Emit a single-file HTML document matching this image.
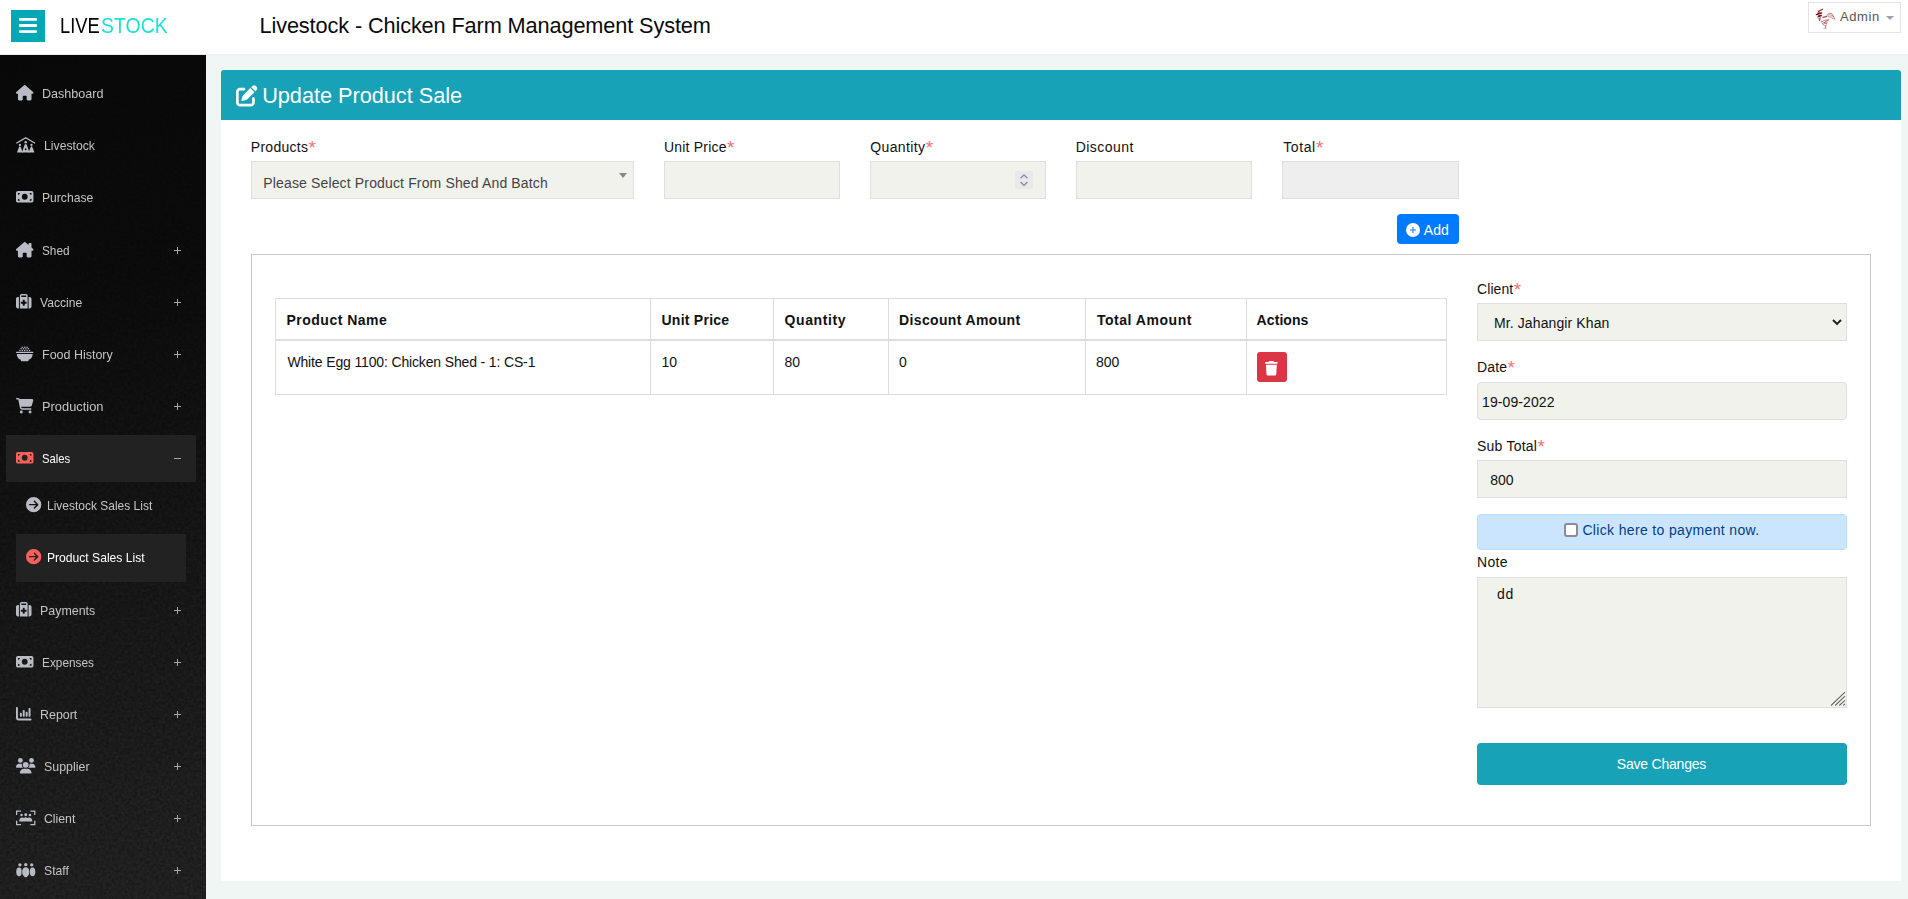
<!DOCTYPE html>
<html lang="en">
<head>
<meta charset="utf-8">
<title>Livestock - Chicken Farm Management System</title>
<style>
*{box-sizing:border-box;margin:0;padding:0}
html,body{width:1908px;height:899px;overflow:hidden}
body{font-family:"Liberation Sans",sans-serif;font-size:14px;color:#111;background:#f0f6f3;position:relative}
.ic{position:absolute;display:block;overflow:visible}
.t{position:absolute;white-space:nowrap}
#hdr{position:absolute;left:0;top:0;width:1908px;height:55px;background:#fff;border-bottom:1px solid #eceef3}
#burger{position:absolute;left:11px;top:10px;width:34px;height:32px;background:#01a8b3}
#admin{position:absolute;left:1808px;top:2px;width:93px;height:31px;border:1px solid #e4e4e4;background:#fff}
#caret{position:absolute;left:1886px;top:16px;width:0;height:0;border-left:4px solid transparent;border-right:4px solid transparent;border-top:4px solid #9a9fb2}
#side{position:absolute;left:0;top:55px;width:206px;height:844px;background:linear-gradient(165deg,#080808 0%,#0a0a0a 30%,#121212 62%,#1a1a1a 100%);overflow:hidden}
.bx{position:absolute;background:#222}
.pl{position:absolute;width:7px;height:7px}
.pl:before{content:"";position:absolute;left:0;top:3px;width:7px;height:1px;background:#a8a8a8}
.pl.p:after{content:"";position:absolute;left:3px;top:0;width:1px;height:7px;background:#a8a8a8}
#card{position:absolute;left:221px;top:70px;width:1680px;height:811px;background:#fff;border-radius:3px 3px 0 0}
#chead{position:absolute;left:221px;top:70px;width:1680px;height:50px;background:#17a2b8;border-radius:3px 3px 0 0}
.lb{color:#111}
.lb em{font-style:normal;color:#ff6d77;font-size:19px;line-height:0;position:relative;top:2.2px;left:0.3px;letter-spacing:0}
.inp{position:absolute;background:#f1f2eb;border:1px solid #dfdfe3;height:38px}
#panel{position:absolute;left:251px;top:254px;width:1620px;height:572px;border:1px solid #c9c9c9;background:#fff}
.tb{position:absolute;background:#dddddd}
</style>
</head>
<body>

<div id="hdr"></div>
<div id="burger"></div>
<svg class="ic" style="left:18.9px;top:18px;width:18px;height:15.2px;fill:#fff" viewBox="0 0 18 15.2"><rect x="0" y="0" width="18" height="2.800" rx="1"/><rect x="0" y="6.100" width="18" height="2.800" rx="1"/><rect x="0" y="12.200" width="18" height="2.800" rx="1"/></svg>
<div class="t " id="logo1" style="left:59.6px;top:11.97px;font-size:21.73px;line-height:27px;color:#000;transform:scaleX(0.8421);transform-origin:0 0;">LIVE</div>
<div class="t " id="logo2" style="left:101.0px;top:11.97px;font-size:21.73px;line-height:27px;color:#1fe0d4;transform:scaleX(0.8957);transform-origin:0 0;">STOCK</div>
<div class="t " id="title" style="left:259.5px;top:11.97px;font-size:21.73px;line-height:27px;color:#0a0a0a;letter-spacing:-0.119px;">Livestock - Chicken Farm Management System</div>
<div id="admin"></div>
<svg class="ic" style="left:1812px;top:6px;width:26px;height:26px" viewBox="1812 6 26 26" fill="none" stroke="#8e1b1b" stroke-linecap="round"><path d="M1818.500 11.600l4-2.300M1819 10.800l3.200-1" stroke="#9c2a2a" stroke-width="1.100"/><path d="M1816.300 14.600l5.200-1.400M1818 13.200l3.600-.4" stroke="#7d0a0a" stroke-width="1.200"/><path d="M1817.800 17l3.600-1.200M1818.600 15.800l2.600-.4" stroke="#7d0a0a" stroke-width="1.200"/><path d="M1819 18.400l.5 2.400M1820.200 17.600l-.2 2" stroke="#8e1b1b" stroke-width="1" opacity=".8"/><path d="M1823 17.400l3.800-.9" stroke-width="1.100" opacity=".85"/><path d="M1826.500 16.200c1-1.800 2.200-3 3.400-3.100 1.500-.1 2.600 1.200 3.400 2.800.6 1.200 1.100 2.300 1.400 3.300" stroke-width=".9" opacity=".6"/><path d="M1828 15.500l3-1.500M1828.500 16.800l4-1.600M1830 17.300l3.500-.6M1832 18.400l2 .4" stroke-width=".9" opacity=".45"/><path d="M1821.200 21c.6 2.200 2 4.200 4.400 5.300M1822 21.200l4.800 2.400M1823.600 20.400l4.400-.6M1824.400 22.800l3.800-2.400M1823 24l4.500-1.200M1825.200 21.400l3.800-1.800" stroke-width=".9" opacity=".5"/><path d="M1826.200 24.800l-.8 2.800" stroke-width=".9" opacity=".6"/><path d="M1823.800 28.600l2.600-.3" stroke-width=".9" opacity=".4"/></svg>
<div class="t " id="adm" style="left:1840.0px;top:8.4px;font-size:13.0px;line-height:18px;color:#555;letter-spacing:0.6px;">Admin</div>
<div id="caret"></div>
<div id="side"><svg width="206" height="844" style="position:absolute;left:0;top:0;display:block;-webkit-mask-image:linear-gradient(165deg,rgba(0,0,0,.15) 0%,rgba(0,0,0,.3) 30%,#000 90%);mask-image:linear-gradient(165deg,rgba(0,0,0,.15) 0%,rgba(0,0,0,.3) 30%,#000 90%)"><filter id="nz" x="0" y="0" width="100%" height="100%"><feTurbulence type="fractalNoise" baseFrequency="0.32" numOctaves="3" seed="4"/><feColorMatrix type="matrix" values="0 0 0 0 1  0 0 0 0 1  0 0 0 0 1  0.050 0.050 0.050 0 -0.048"/></filter><rect width="206" height="844" filter="url(#nz)"/></svg></div>
<div class="bx" style="left:6px;top:435px;width:190px;height:47px"></div>
<div class="bx" style="left:16px;top:534px;width:170px;height:48px"></div>
<svg class="ic" style="left:15.8px;top:84.7px;width:17.44px;height:15.5px;fill:#b9bcc4;" viewBox="0 0 576 512"><path d="M575.8 255.5c0 18-15 32.1-32 32.1h-32l.7 160.2c0 2.700-.2 5.400-.5 8.100V472c0 22.100-17.900 40-40 40H456c-1.100 0-2.200 0-3.300-.1c-1.400 .1-2.800 .1-4.200 .1H416 392c-22.100 0-40-17.900-40-40V448 384c0-17.700-14.300-32-32-32H256c-17.700 0-32 14.300-32 32v64 24c0 22.100-17.900 40-40 40H160 128.100c-1.500 0-3-.1-4.500-.2c-1.200 .1-2.400 .2-3.600 .2H104c-22.100 0-40-17.900-40-40V360c0-.9 0-1.900 .1-2.800V287.600H32c-18 0-32-14-32-32.100c0-9 3-17 10-24L266.400 8c7-7 15-8 22-8s15 2 21 7L564.800 231.500c8 7 12 15 11 24z"/></svg>
<div class="t sd" id="s_Dashboard" style="left:42.3px;top:86.0px;font-size:13.0px;line-height:16px;color:#c4c4c4;transform:scaleX(0.9671);transform-origin:0 0;">Dashboard</div>
<svg class="ic" style="left:15.8px;top:136.7px;width:19.38px;height:15.5px;fill:#b9bcc4;" viewBox="0 0 640 512"><path d="M320 0L640 186 620 224 320 50 20 224 0 186z"/><circle cx="320" cy="176" r="42"/><path d="M320 228c14 0 26 8 32 22l92 262H196l92-262c6-14 18-22 32-22z"/><circle cx="320" cy="404" r="30" fill="#0b0b0b"/><circle cx="128" cy="262" r="38"/><path d="M128 308c12 0 22 7 27 19l71 185H30l71-185c5-12 15-19 27-19z"/><circle cx="512" cy="262" r="38"/><path d="M512 308c12 0 22 7 27 19l71 185H414l71-185c5-12 15-19 27-19z"/></svg>
<div class="t sd" id="s_Livestock" style="left:43.75px;top:138.0px;font-size:13.0px;line-height:16px;color:#c4c4c4;transform:scaleX(0.9406);transform-origin:0 0;">Livestock</div>
<svg class="ic" style="left:15.8px;top:188.7px;width:17.44px;height:15.5px;fill:#b9bcc4;" viewBox="0 0 576 512"><path d="M64 64C28.7 64 0 92.7 0 128V384c0 35.300 28.700 64 64 64H512c35.300 0 64-28.700 64-64V128c0-35.300-28.700-64-64-64H64zm64 320H64V320c35.300 0 64 28.700 64 64zM64 192V128h64c0 35.300-28.700 64-64 64zM448 384c0-35.300 28.700-64 64-64v64H448zm64-192c-35.300 0-64-28.700-64-64h64v64zM288 160a96 96 0 1 1 0 192 96 96 0 1 1 0-192z"/></svg>
<div class="t sd" id="s_Purchase" style="left:42.3px;top:190.0px;font-size:13.0px;line-height:16px;color:#c4c4c4;transform:scaleX(0.9326);transform-origin:0 0;">Purchase</div>
<svg class="ic" style="left:15.8px;top:241.7px;width:17.44px;height:15.5px;fill:#b9bcc4;" viewBox="0 0 576 512"><path d="M543.8 287.6c17 0 32-14 32-32.1c1-9-3-17-11-24L512 185V64c0-17.700-14.300-32-32-32H448c-17.700 0-32 14.300-32 32v36.700L309.500 7c-6-5-14-7-21-7s-15 1-22 8L10 231.500c-7 7-10 15-10 24c0 18 14 32.100 32 32.100h32v69.700c-.1 .9-.1 1.800-.1 2.800V472c0 22.100 17.900 40 40 40h16c1.200 0 2.400-.1 3.600-.2c1.500 .1 3 .2 4.500 .2H160h24c22.100 0 40-17.900 40-40V448 384c0-17.700 14.300-32 32-32h64c17.700 0 32 14.300 32 32v64 24c0 22.100 17.900 40 40 40h24 32.500c1.400 0 2.800 0 4.200-.1c1.100 .1 2.200 .1 3.300 .1h16c22.100 0 40-17.900 40-40V455.800c.3-2.600 .5-5.300 .5-8.100l-.7-160.200h32z"/></svg>
<div class="t sd" id="s_Shed" style="left:42.3px;top:243.0px;font-size:13.0px;line-height:16px;color:#c4c4c4;transform:scaleX(0.9072);transform-origin:0 0;">Shed</div>
<div class="pl p" style="left:174px;top:247px"></div>
<svg class="ic" style="left:15.8px;top:293.7px;width:15.5px;height:15.5px;fill:#b9bcc4;" viewBox="0 0 512 512"><path d="M184 48H328c4.400 0 8 3.600 8 8V96H176V56c0-4.400 3.600-8 8-8zm-56 8V96v32V480H384V128 96 56c0-30.900-25.100-56-56-56H184c-30.900 0-56 25.100-56 56zM96 96H64C28.700 96 0 124.700 0 160V416c0 35.300 28.700 64 64 64H96V96zM416 480h32c35.300 0 64-28.700 64-64V160c0-35.300-28.700-64-64-64H416V480zM224 208c0-8.800 7.200-16 16-16h32c8.800 0 16 7.200 16 16v48h48c8.800 0 16 7.200 16 16v32c0 8.800-7.200 16-16 16H288v48c0 8.800-7.200 16-16 16H240c-8.800 0-16-7.200-16-16V320H176c-8.800 0-16-7.200-16-16V272c0-8.800 7.200-16 16-16h48V208z"/></svg>
<div class="t sd" id="s_Vaccine" style="left:40.1px;top:295.0px;font-size:13.0px;line-height:16px;color:#c4c4c4;transform:scaleX(0.931);transform-origin:0 0;">Vaccine</div>
<div class="pl p" style="left:174px;top:299px"></div>
<svg class="ic" style="left:15.8px;top:345.7px;width:17.44px;height:15.5px;fill:#b9bcc4;" viewBox="0 0 576 512"><rect x="0" y="190" width="576" height="44" rx="22"/><path d="M26 262H550C550 356 498 424 416 456v14c0 18-14 32-32 32H192c-18 0-32-14-32-32v-14C78 424 26 356 26 262z"/><circle cx="128" cy="150" r="25"/><circle cx="208" cy="150" r="25"/><circle cx="288" cy="150" r="25"/><circle cx="368" cy="150" r="25"/><circle cx="448" cy="150" r="25"/><circle cx="168" cy="94" r="25"/><circle cx="248" cy="94" r="25"/><circle cx="328" cy="94" r="25"/><circle cx="408" cy="94" r="25"/><circle cx="208" cy="38" r="25"/><circle cx="288" cy="38" r="25"/><circle cx="368" cy="38" r="25"/></svg>
<div class="t sd" id="s_FoodHistory" style="left:42.3px;top:347.0px;font-size:13.0px;line-height:16px;color:#c4c4c4;transform:scaleX(0.9603);transform-origin:0 0;">Food History</div>
<div class="pl p" style="left:174px;top:351px"></div>
<svg class="ic" style="left:15.8px;top:397.7px;width:17.44px;height:15.5px;fill:#b9bcc4;" viewBox="0 0 576 512"><path d="M0 24C0 10.700 10.700 0 24 0H69.500c22 0 41.500 12.800 50.600 32h411c26.300 0 45.500 25 38.600 50.400l-41 152.300c-8.500 31.400-37 53.300-69.500 53.300H170.700l5.400 28.500c2.200 11.300 12.100 19.500 23.600 19.500H488c13.300 0 24 10.700 24 24s-10.700 24-24 24H199.700c-34.600 0-64.300-24.600-70.700-58.500L77.400 54.500c-.7-3.800-4-6.500-7.900-6.500H24C10.700 48 0 37.300 0 24zM128 464a48 48 0 1 1 96 0 48 48 0 1 1 -96 0zm336-48a48 48 0 1 1 0 96 48 48 0 1 1 0-96z"/></svg>
<div class="t sd" id="s_Production" style="left:42.3px;top:399.0px;font-size:13.0px;line-height:16px;color:#c4c4c4;transform:scaleX(0.9882);transform-origin:0 0;">Production</div>
<div class="pl p" style="left:174px;top:403px"></div>
<svg class="ic" style="left:15.8px;top:449.7px;width:17.44px;height:15.5px;fill:#f9605a;" viewBox="0 0 576 512"><path d="M64 64C28.7 64 0 92.7 0 128V384c0 35.300 28.700 64 64 64H512c35.300 0 64-28.700 64-64V128c0-35.300-28.700-64-64-64H64zm64 320H64V320c35.300 0 64 28.700 64 64zM64 192V128h64c0 35.300-28.700 64-64 64zM448 384c0-35.300 28.700-64 64-64v64H448zm64-192c-35.300 0-64-28.700-64-64h64v64zM288 160a96 96 0 1 1 0 192 96 96 0 1 1 0-192z"/></svg>
<div class="t sd" id="s_Sales" style="left:42.3px;top:451.0px;font-size:13.0px;line-height:16px;color:#fff;transform:scaleX(0.8666);transform-origin:0 0;">Sales</div>
<div class="pl" style="left:174px;top:455px"></div>
<svg class="ic" style="left:25.9px;top:497px;width:15.3px;height:15.3px;fill:#b9bcc4;" viewBox="0 0 512 512"><path d="M0 256a256 256 0 1 0 512 0A256 256 0 1 0 0 256zM297 385c-9.400 9.400-24.600 9.400-33.900 0s-9.400-24.600 0-33.900l71-71L120 280c-13.300 0-24-10.700-24-24s10.700-24 24-24l214.100 0-71-71c-9.400-9.400-9.400-24.600 0-33.900s24.600-9.400 33.900 0L409 239c9.400 9.400 9.400 24.600 0 33.900L297 385z"/></svg>
<div class="t sd" id="s_LivestockSalesList" style="left:47.2px;top:498.0px;font-size:13.0px;line-height:16px;color:#c4c4c4;transform:scaleX(0.9221);transform-origin:0 0;">Livestock Sales List</div>
<svg class="ic" style="left:25.9px;top:549px;width:15.3px;height:15.3px;fill:#f9605a;" viewBox="0 0 512 512"><path d="M0 256a256 256 0 1 0 512 0A256 256 0 1 0 0 256zM297 385c-9.400 9.400-24.600 9.400-33.900 0s-9.400-24.600 0-33.900l71-71L120 280c-13.300 0-24-10.700-24-24s10.700-24 24-24l214.100 0-71-71c-9.400-9.400-9.400-24.600 0-33.900s24.600-9.400 33.900 0L409 239c9.400 9.400 9.400 24.600 0 33.900L297 385z"/></svg>
<div class="t sd" id="s_ProductSalesList" style="left:47.2px;top:550.0px;font-size:13.0px;line-height:16px;color:#fff;transform:scaleX(0.9316);transform-origin:0 0;">Product Sales List</div>
<svg class="ic" style="left:15.8px;top:601.7px;width:15.5px;height:15.5px;fill:#b9bcc4;" viewBox="0 0 512 512"><path d="M184 48H328c4.400 0 8 3.600 8 8V96H176V56c0-4.400 3.600-8 8-8zm-56 8V96v32V480H384V128 96 56c0-30.900-25.100-56-56-56H184c-30.900 0-56 25.100-56 56zM96 96H64C28.700 96 0 124.700 0 160V416c0 35.300 28.700 64 64 64H96V96zM416 480h32c35.300 0 64-28.700 64-64V160c0-35.300-28.700-64-64-64H416V480zM224 208c0-8.800 7.200-16 16-16h32c8.800 0 16 7.200 16 16v48h48c8.800 0 16 7.200 16 16v32c0 8.800-7.200 16-16 16H288v48c0 8.800-7.200 16-16 16H240c-8.800 0-16-7.200-16-16V320H176c-8.800 0-16-7.200-16-16V272c0-8.800 7.200-16 16-16h48V208z"/></svg>
<div class="t sd" id="s_Payments" style="left:40.1px;top:603.0px;font-size:13.0px;line-height:16px;color:#c4c4c4;transform:scaleX(0.955);transform-origin:0 0;">Payments</div>
<div class="pl p" style="left:174px;top:607px"></div>
<svg class="ic" style="left:15.8px;top:653.7px;width:17.44px;height:15.5px;fill:#b9bcc4;" viewBox="0 0 576 512"><path d="M64 64C28.7 64 0 92.7 0 128V384c0 35.300 28.700 64 64 64H512c35.300 0 64-28.700 64-64V128c0-35.300-28.700-64-64-64H64zm64 320H64V320c35.300 0 64 28.700 64 64zM64 192V128h64c0 35.300-28.700 64-64 64zM448 384c0-35.300 28.700-64 64-64v64H448zm64-192c-35.300 0-64-28.700-64-64h64v64zM288 160a96 96 0 1 1 0 192 96 96 0 1 1 0-192z"/></svg>
<div class="t sd" id="s_Expenses" style="left:42.3px;top:655.0px;font-size:13.0px;line-height:16px;color:#c4c4c4;transform:scaleX(0.9099);transform-origin:0 0;">Expenses</div>
<div class="pl p" style="left:174px;top:659px"></div>
<svg class="ic" style="left:15.8px;top:705.7px;width:15.5px;height:15.5px;fill:#b9bcc4;" viewBox="0 0 512 512"><path d="M32 32c17.700 0 32 14.300 32 32V400c0 8.800 7.200 16 16 16H480c17.700 0 32 14.300 32 32s-14.300 32-32 32H80c-44.200 0-80-35.800-80-80V64C0 46.300 14.300 32 32 32zM160 224c17.700 0 32 14.300 32 32v64c0 17.700-14.300 32-32 32s-32-14.300-32-32V256c0-17.700 14.300-32 32-32zm128-64V320c0 17.700-14.300 32-32 32s-32-14.300-32-32V160c0-17.700 14.300-32 32-32s32 14.300 32 32zm64 32c17.700 0 32 14.300 32 32v96c0 17.700-14.300 32-32 32s-32-14.300-32-32V224c0-17.700 14.300-32 32-32zM480 96V320c0 17.700-14.300 32-32 32s-32-14.300-32-32V96c0-17.700 14.300-32 32-32s32 14.300 32 32z"/></svg>
<div class="t sd" id="s_Report" style="left:40.1px;top:707.0px;font-size:13.0px;line-height:16px;color:#c4c4c4;transform:scaleX(0.9561);transform-origin:0 0;">Report</div>
<div class="pl p" style="left:174px;top:711px"></div>
<svg class="ic" style="left:15.8px;top:757.7px;width:19.38px;height:15.5px;fill:#b9bcc4;" viewBox="0 0 640 512"><path d="M144 0a80 80 0 1 1 0 160A80 80 0 1 1 144 0zM512 0a80 80 0 1 1 0 160A80 80 0 1 1 512 0zM0 298.700C0 239.800 47.800 192 106.700 192h42.700c15.900 0 31 3.500 44.600 9.700c-1.300 7.200-1.900 14.700-1.900 22.300c0 38.200 16.800 72.500 43.300 96c-.2 0-.4 0-.7 0H21.300C9.600 320 0 310.400 0 298.700zM405.300 320c-.2 0-.4 0-.7 0c26.600-23.500 43.300-57.800 43.300-96c0-7.600-.7-15-1.900-22.300c13.600-6.300 28.700-9.700 44.600-9.700h42.700C592.200 192 640 239.800 640 298.700c0 11.800-9.600 21.300-21.300 21.300H405.300zM224 224a96 96 0 1 1 192 0 96 96 0 1 1 -192 0zM128 485.300C128 411.700 187.700 352 261.300 352H378.700C452.300 352 512 411.700 512 485.300c0 14.700-11.900 26.700-26.700 26.700H154.700c-14.700 0-26.700-11.900-26.700-26.700z"/></svg>
<div class="t sd" id="s_Supplier" style="left:44.2px;top:759.0px;font-size:13.0px;line-height:16px;color:#c4c4c4;transform:scaleX(0.9542);transform-origin:0 0;">Supplier</div>
<div class="pl p" style="left:174px;top:763px"></div>
<svg class="ic" style="left:15.8px;top:809.7px;width:19.38px;height:15.5px;fill:#b9bcc4;" viewBox="0 0 640 512"><path d="M0 16h165v42H42v108H0zM640 16H475v42h123v108h42zM0 505h165v-42H42V355H0zM640 505H475v-42h123V355h42z"/><circle cx="322" cy="158" r="48"/><circle cx="182" cy="168" r="42"/><circle cx="462" cy="168" r="42"/><path d="M104 376c0-82 44-130 104-130 28 0 48 8 60 20 14-16 34-24 54-24s40 8 54 24c12-12 32-20 60-20 60 0 104 48 104 130z"/></svg>
<div class="t sd" id="s_Client" style="left:44.2px;top:811.0px;font-size:13.0px;line-height:16px;color:#c4c4c4;transform:scaleX(0.9433);transform-origin:0 0;">Client</div>
<div class="pl p" style="left:174px;top:815px"></div>
<svg class="ic" style="left:15.8px;top:861.7px;width:19.38px;height:15.5px;fill:#b9bcc4;" viewBox="0 0 640 512"><circle cx="129" cy="92" r="54"/><circle cx="323" cy="88" r="56"/><circle cx="518" cy="92" r="54"/><ellipse cx="100" cy="325" rx="92" ry="146"/><ellipse cx="546" cy="325" rx="92" ry="146"/><path d="M323 172c-72 0-120 62-120 152 0 72 30 132 72 152v12c0 9 7 16 16 16h64c9 0 16-7 16-16v-12c42-20 72-80 72-152 0-90-48-152-120-152z" stroke="#121212" stroke-width="30" paint-order="stroke"/></svg>
<div class="t sd" id="s_Staff" style="left:44.2px;top:863.0px;font-size:13.0px;line-height:16px;color:#c4c4c4;transform:scaleX(0.9391);transform-origin:0 0;">Staff</div>
<div class="pl p" style="left:174px;top:867px"></div>
<div id="card"></div><div id="chead"></div>
<svg class="ic" style="left:235.8px;top:84.5px;width:21.5px;height:21.5px;fill:#fff;" viewBox="0 0 512 512"><path d="M471.600 21.700c-21.900-21.900-57.300-21.900-79.200 0L362.300 51.700l97.900 97.900 30.100-30.100c21.900-21.900 21.900-57.300 0-79.200L471.600 21.700zm-299.200 220c-6.100 6.100-10.800 13.600-13.500 21.900l-29.600 88.800c-2.900 8.600-.6 18.100 5.800 24.600s15.900 8.700 24.600 5.800l88.800-29.600c8.200-2.700 15.700-7.400 21.900-13.500L437.700 172.300 339.700 74.300 172.400 241.700zM96 64C43 64 0 107 0 160V416c0 53 43 96 96 96H352c53 0 96-43 96-96V320c0-17.700-14.300-32-32-32s-32 14.300-32 32v96c0 17.700-14.300 32-32 32H96c-17.700 0-32-14.300-32-32V160c0-17.700 14.300-32 32-32h96c17.700 0 32-14.300 32-32s-14.300-32-32-32H96z"/></svg>
<div class="t " id="ch" style="left:262.15px;top:81.97px;font-size:21.73px;line-height:27px;color:#fff;letter-spacing:-0.025px;">Update Product Sale</div>
<div class="t lb" style="left:250.85px;top:138.25px;font-size:14.0px;line-height:19px;letter-spacing:0.257px;"><span id="l1">Products</span><em>*</em></div>
<div class="t lb" style="left:664.0px;top:138.25px;font-size:14.0px;line-height:19px;letter-spacing:0.2px;"><span id="l2">Unit Price</span><em>*</em></div>
<div class="t lb" style="left:870.2px;top:138.25px;font-size:14.0px;line-height:19px;letter-spacing:0.391px;"><span id="l3">Quantity</span><em>*</em></div>
<div class="t lb" style="left:1075.75px;top:138.25px;font-size:14.0px;line-height:19px;letter-spacing:0.452px;"><span id="l4">Discount</span></div>
<div class="t lb" style="left:1283.2px;top:138.25px;font-size:14.0px;line-height:19px;letter-spacing:0.6px;"><span id="l5">Total</span><em>*</em></div>
<div class="inp" style="left:251px;top:161px;width:383px"></div>
<div class="inp" style="left:664px;top:161px;width:176px"></div>
<div class="inp" style="left:870px;top:161px;width:176px"></div>
<div class="inp" style="left:1076px;top:161px;width:176px"></div>
<div class="inp" style="left:1282px;top:161px;width:177px;background:#eeeeee"></div>
<div class="t " id="sel" style="left:263.3px;top:174.05px;font-size:14.0px;line-height:19px;color:#444;letter-spacing:0.146px;">Please Select Product From Shed And Batch</div>
<div style="position:absolute;left:619px;top:173px;width:0;height:0;border-left:4px solid transparent;border-right:4px solid transparent;border-top:5px solid #888"></div>
<div style="position:absolute;left:1015px;top:171px;width:18px;height:18px;background:#e9e9ed"></div>
<svg class="ic" style="left:1015px;top:171px;width:18px;height:18px" viewBox="0 0 18 18"><path d="M5.600 7.200L9 3.800l3.400 3.400M5.600 11l3.400 3.400 3.400-3.400" fill="none" stroke="#8a8a95" stroke-width="1.300"/></svg>
<div style="position:absolute;left:1397px;top:214px;width:62px;height:30px;background:#007bff;border-radius:4px"></div>
<svg class="ic" style="left:1406px;top:223px;width:14px;height:14px" viewBox="0 0 512 512"><circle cx="256" cy="256" r="256" fill="#fff"/><path d="M150 238h212v36H150zM238 150h36v212h-36z" fill="#007bff"/></svg>
<div class="t " id="add" style="left:1423.8px;top:220.65px;font-size:14.0px;line-height:19px;color:#fff;letter-spacing:0px;">Add</div>
<div id="panel"></div>
<div class="tb" style="left:275px;top:298px;width:1px;height:97px"></div>
<div class="tb" style="left:650px;top:298px;width:1px;height:97px"></div>
<div class="tb" style="left:773px;top:298px;width:1px;height:97px"></div>
<div class="tb" style="left:888px;top:298px;width:1px;height:97px"></div>
<div class="tb" style="left:1085px;top:298px;width:1px;height:97px"></div>
<div class="tb" style="left:1246px;top:298px;width:1px;height:97px"></div>
<div class="tb" style="left:1446px;top:298px;width:1px;height:97px"></div>
<div class="tb" style="left:275px;top:298px;width:1172px;height:1px"></div>
<div class="tb" style="left:275px;top:339px;width:1172px;height:2px"></div>
<div class="tb" style="left:275px;top:394px;width:1172px;height:1px"></div>
<div class="t " id="th0" style="left:286.5px;top:310.75px;font-size:14.0px;line-height:19px;color:#111;letter-spacing:0.488px;font-weight:700;">Product Name</div>
<div class="t " id="td0" style="left:287.4px;top:352.85px;font-size:14.0px;line-height:19px;color:#111;letter-spacing:-0.146px;">White Egg 1100: Chicken Shed - 1: CS-1</div>
<div class="t " id="th1" style="left:661.5px;top:310.75px;font-size:14.0px;line-height:19px;color:#111;letter-spacing:0.25px;font-weight:700;">Unit Price</div>
<div class="t " id="td1" style="left:661.5px;top:352.85px;font-size:14.0px;line-height:19px;color:#111;letter-spacing:0px;">10</div>
<div class="t " id="th2" style="left:784.5px;top:310.75px;font-size:14.0px;line-height:19px;color:#111;letter-spacing:0.6px;font-weight:700;">Quantity</div>
<div class="t " id="td2" style="left:784.5px;top:352.85px;font-size:14.0px;line-height:19px;color:#111;letter-spacing:0px;">80</div>
<div class="t " id="th3" style="left:899.05px;top:310.75px;font-size:14.0px;line-height:19px;color:#111;letter-spacing:0.354px;font-weight:700;">Discount Amount</div>
<div class="t " id="td3" style="left:899.05px;top:352.85px;font-size:14.0px;line-height:19px;color:#111;letter-spacing:0px;">0</div>
<div class="t " id="th4" style="left:1096.95px;top:310.75px;font-size:14.0px;line-height:19px;color:#111;letter-spacing:0.527px;font-weight:700;">Total Amount</div>
<div class="t " id="td4" style="left:1096.05px;top:352.85px;font-size:14.0px;line-height:19px;color:#111;letter-spacing:0px;">800</div>
<div class="t " id="th5" style="left:1256.6px;top:310.75px;font-size:14.0px;line-height:19px;color:#111;letter-spacing:0.075px;font-weight:700;">Actions</div>
<div style="position:absolute;left:1257px;top:352px;width:30px;height:30px;background:#dc3545;border-radius:3px"></div>
<svg class="ic" style="left:1265.3px;top:360.6px;width:12.78px;height:14.6px;fill:#fff;" viewBox="0 0 448 512"><path d="M135.200 17.700L128 32H32C14.300 32 0 46.300 0 64S14.300 96 32 96H416c17.700 0 32-14.300 32-32s-14.300-32-32-32H320l-7.200-14.300C307.400 6.800 296.300 0 284.200 0H163.800c-12.100 0-23.200 6.800-28.600 17.700zM416 128H32L53.200 467c1.600 25.300 22.600 45 47.900 45H346.900c25.300 0 46.300-19.700 47.900-45L416 128z"/></svg>
<div class="t lb" style="left:1477.0px;top:279.85px;font-size:14.0px;line-height:19px;letter-spacing:0.09px;"><span id="r1">Client</span><em>*</em></div>
<div class="inp" style="left:1477px;top:303px;width:370px"></div>
<div class="t " id="cli" style="left:1494.0px;top:313.95px;font-size:14.0px;line-height:19px;color:#111;letter-spacing:0.108px;">Mr. Jahangir Khan</div>
<svg class="ic" style="left:1831px;top:318px;width:12px;height:9px" viewBox="0 0 12 9"><path d="M2 2l4 4 4-4" fill="none" stroke="#1a1a1a" stroke-width="1.800"/></svg>
<div class="t lb" style="left:1477.0px;top:357.55px;font-size:14.0px;line-height:19px;letter-spacing:0.15px;"><span id="r2">Date</span><em>*</em></div>
<div class="inp" style="left:1477px;top:382px;width:370px;border-radius:4px"></div>
<div class="t " id="dat" style="left:1482.0px;top:392.65px;font-size:14.0px;line-height:19px;color:#111;letter-spacing:0.1px;">19-09-2022</div>
<div class="t lb" style="left:1477.0px;top:436.65px;font-size:14.0px;line-height:19px;letter-spacing:0.225px;"><span id="r3">Sub Total</span><em>*</em></div>
<div class="inp" style="left:1477px;top:460px;width:370px"></div>
<div class="t " id="sub" style="left:1490.15px;top:470.55px;font-size:14.0px;line-height:19px;color:#111;letter-spacing:0px;">800</div>
<div style="position:absolute;left:1477px;top:514px;width:370px;height:36px;background:#cce5ff;border:1px solid #b8daff;border-radius:4px"></div>
<div style="position:absolute;left:1564px;top:523px;width:14px;height:14px;background:#fff;border:2px solid #8b8a97;border-radius:3px"></div>
<div class="t " id="pay" style="left:1582.4px;top:521.25px;font-size:14.0px;line-height:19px;color:#004085;letter-spacing:0.347px;">Click here to payment now.</div>
<div class="t lb" style="left:1477.0px;top:552.65px;font-size:14.0px;line-height:19px;letter-spacing:0.3px;"><span id="r4">Note</span></div>
<div class="inp" style="left:1477px;top:577px;width:370px;height:131px"></div>
<div class="t " id="dd" style="left:1497.0px;top:584.75px;font-size:14.0px;line-height:19px;color:#111;letter-spacing:0.8px;">dd</div>
<svg class="ic" style="left:1831px;top:692px;width:14px;height:14px" viewBox="0 0 14 14"><path d="M0 13.500L14 .1M4.200 13.500L14 4.200M8.300 13.500L14 8.300M12.300 13.500L14 11.900" fill="none" stroke="#666" stroke-width="1.050"/></svg>
<div style="position:absolute;left:1477px;top:743px;width:370px;height:42px;background:#17a2b8;border-radius:4px"></div>
<div class="t " id="sav" style="left:1616.8px;top:755.15px;font-size:14.0px;line-height:19px;color:#fff;letter-spacing:-0.211px;">Save Changes</div>
</body></html>
